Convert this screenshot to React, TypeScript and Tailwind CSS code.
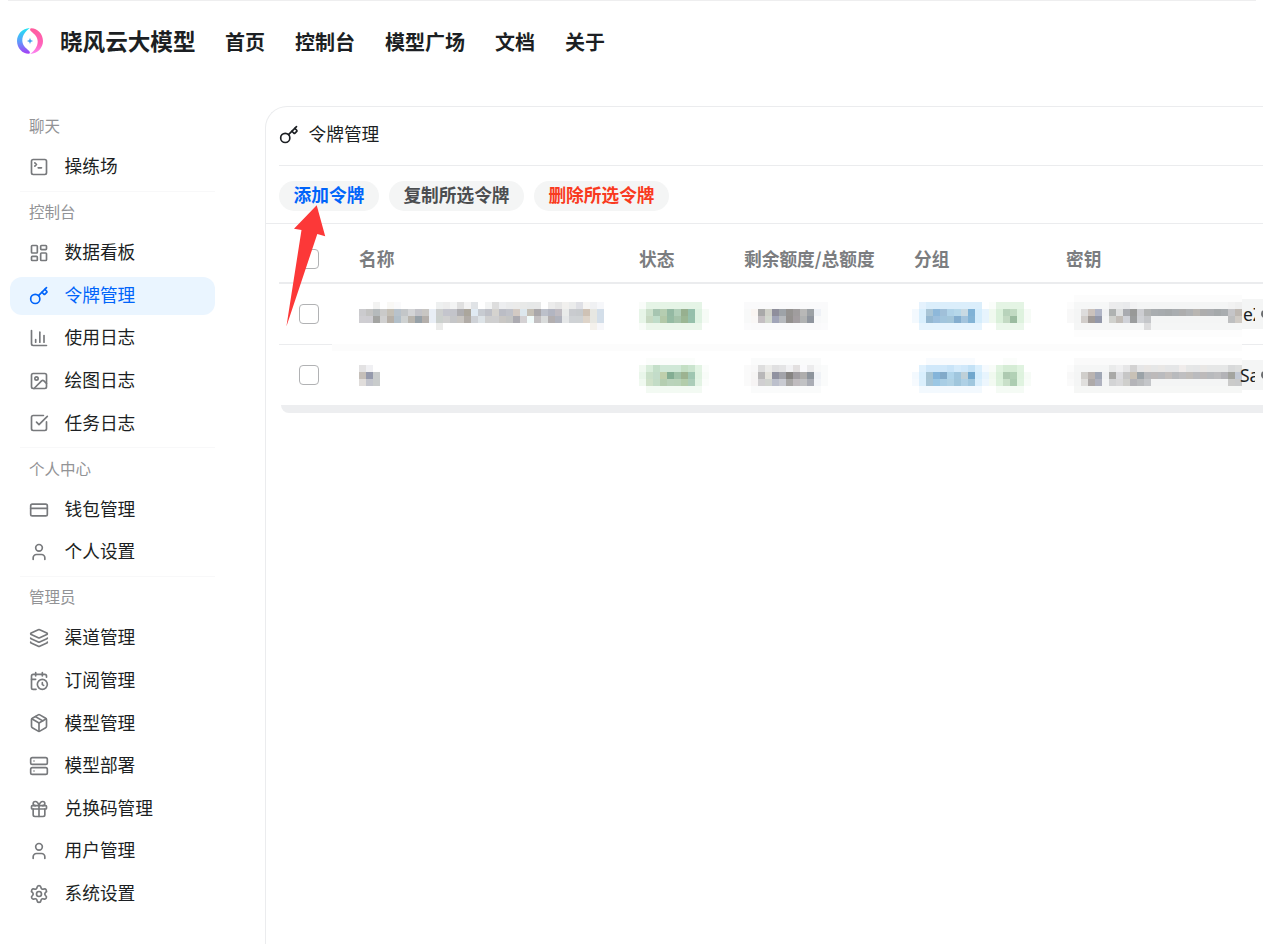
import {
  CalendarClock,
  ChartColumn,
  CreditCard,
  Gift,
  Image,
  Key,
  Layers,
  LayoutDashboard,
  Package,
  Server,
  Settings,
  SquareCheckBig,
  SquareTerminal,
  User,
  type LucideIcon,
} from 'lucide-react';

type NavItem = { label: string; icon: LucideIcon; active?: boolean };

const topLinks = ['首页', '控制台', '模型广场', '文档', '关于'];

const sections: { title: string; items: NavItem[] }[] = [
  { title: '聊天', items: [{ label: '操练场', icon: SquareTerminal }] },
  {
    title: '控制台',
    items: [
      { label: '数据看板', icon: LayoutDashboard },
      { label: '令牌管理', icon: Key, active: true },
      { label: '使用日志', icon: ChartColumn },
      { label: '绘图日志', icon: Image },
      { label: '任务日志', icon: SquareCheckBig },
    ],
  },
  {
    title: '个人中心',
    items: [
      { label: '钱包管理', icon: CreditCard },
      { label: '个人设置', icon: User },
    ],
  },
  {
    title: '管理员',
    items: [
      { label: '渠道管理', icon: Layers },
      { label: '订阅管理', icon: CalendarClock },
      { label: '模型管理', icon: Package },
      { label: '模型部署', icon: Server },
      { label: '兑换码管理', icon: Gift },
      { label: '用户管理', icon: User },
      { label: '系统设置', icon: Settings },
    ],
  },
];

// Masked values. One string per line of 7px blocks: "." is an empty block,
// "color*n" repeats the block n times.
const rows = [
  {
    name: [
      '',
      '.*2 f3f3f2 . f9f8f5 fafafb .*5 eef0f0 ededed f3f4f4 e0e0e0 f3f3f3 e0e3e6 . f3f4f4 dddddd edeef0 eaebec ebebea e8e9e8 e6e8e8 e7e8e8 . ececec e6e6e6 f1f0ee ebecec dfe0e5 f6f5f3 f0f1f3 f6f7fa',
      'cbcbce c3c3c2 b5babc cacac9 c4bfb5 b8c2cb c3c6c8 d3d4d6 c3c3c8 c8c6c3 e9eef5 cdcfce c4c5cd c3c4ca aeadb0 aba69c e0eaf3 c7cbd1 bfc1c8 d5d3cf bbbdc5 c0c2c9 d3cac3 dde7ed c4bfb5 a9a7aa bcc0ca b2b5c1 bfbbc1 e9ebea c9cbcf c7cacd cfc2b5 e7e7e2 d3dee9',
      'cfced2 cecdd2 a3a4a2 d0d0d0 b7b0a8 b2bfc9 ced1d1 b9b5ae 97a1a8 b4afab e9eef5 cbd0cd d0d0d0 c5c6c8 c9c6c2 b1aca7 ced1d6 dde3e7 cfcfcf cfcfd0 c9c7c4 c4c5c4 acabb1 d4d1d3 f1fbfb c2bfc1 d9dbdb b3afb0 b0b3bd e5e7e8 cfd2d5 cfd2d4 ded4c9 e7e7e2 d3dee9',
      '.*11 ebebea .*21 f4f1ec f7f7fa',
    ],
    status: [
      '',
      'f9fcf9 e5f4e6*8',
      'e7f5e8 cce0cb a7c5b1 b5cdb1 94b9a3 b0ceb8 97b08f 95bfab dff2e2 f6fbf6',
      'e7f5e8 c7d9c2 bfdcc9 b2c8a8 95bba3 a5c3aa 9bb794 96c0ab dff2e2 f6fbf6',
      'f8fcf8 ebf6eb*8',
    ],
    quota: [
      '',
      'fafafb*12',
      'f8f9f9 f9f5f2 a9a9a9 cfd0c8 8f8f9c 9ea3a8 959391 a09d9e b8b8b7 9ca1a5 eef1f6 f9fafa',
      'f8f9f9 f9f7f6 c4bfc2 d2d7ce a1a5b8 b6b9bd 94918f a39ea1 b0b2b2 8f959e f7f8f9 f9fafa',
      'fbfbfc fafafb*10 fbfbfc',
    ],
    group: [
      '',
      '. e5f2fd dbeefb*8 . fafdfa e4f4e4*4',
      'f3f9fe d9effd a9c5d6 8eb8da a0c0d9 b0d3e8 b6d8ea c9dae3 7fb2d6 d5edfc e7f4fd f0f9ef daf0da b8d3bb c1dac2 def2de f6fbf6',
      'f3f9fe d9effd 95b8d1 9cbfdd a1c5dd a3c6da 84aecf a3c4dd 83b4d6 d5edfc e7f4fd f0f9ef daf0da c3dac3 9bbca0 def2de f6fbf6',
      '. e6f4fe*9 .*2 ebf7eb*4',
    ],
    secret: [
      '. fcfcfc*24',
      'fcfcfc f6f7f7*5 ececed ebeced e9eaec f2f2f3 f4f5f5*13 f2f2f2 efefef',
      'f8f8f8 f4f5f5 dddcdc cbc2bc b0b5c6 f1f2f3 afb2b1 dedfdf a9abb0 989998 cccdd1 b2b4b4 a9adb0 a7abae a5a9ab a9adb0 adadad b0b2b4 b9b6b2 adadad abadb0 a5a9ab a9adb0 c5c5c8 beb8b2',
      'f8f8f8 f4f5f5 d1cdca a19b98 9398aa f4f5f5 d0d1cd c2bdb8 d0d2d8 9b9d9e cfd1d5 c4c6c9 f4f5f5*11 bebfc0 d0cbc5',
      '. f5f6f6*10 dcdcdd f5f6f6*13',
      '. fdfdfd*24',
    ],
    tail: 'eZ',
  },
  {
    name: [
      '',
      'e3e2e3 f0f0f3',
      'c5bfb9 959aac c9cccc',
      'e0dddb c3c5cd c9cccc',
    ],
    status: [
      '. fbfdfb*7',
      'f1f9f1 d9eddb c4dfc9 d0e8d7*3 c4dfc4 cae4ce e2f3e3 fbfdfb',
      'e9f6ea cae0c9 c3dcc9 bfcfac 83ad93 a0c2a8 9db391 9fc6b1 e0f2e1 f8fcf8',
      'f0f9f0 cfe1c9 c3dcc6 b5ceb1 bad3bb b9d3b9 b3cdab accdb9 e3f3e4 fbfdfb',
      '. f3faf3*8',
    ],
    quota: [
      '. fafbfb*10',
      'fafafa f8f8f8 dedede ececea e0e0e1 e4e4e5 f2f2f4 e3e0e0 fafafc ececed f8f9f9 fafbfb',
      'fafafa f6f5f4 b8b7b8 e3e2db 9092a0 a3a4aa 868482 a19ea2 afaead 8d949c eff2f6 fafbfb',
      'fafafa f6f4f4 d0cfd1 d0d3cf bcc0cc c9cbd2 a9a8a7 c0bcbf c1c2c4 aaadb5 f3f5f8 fafbfb',
      '. fafbfb*10',
    ],
    group: [
      '.*2 f8fbfe*7 .*4 fbfdfb*2',
      '. e0f1fd d0e8fa*3 c9e4f8 d5ebfb d0e8fa c4e2f6 dbeffc f5fafe f8fcf8 e0f3e0 d5ecd5*2 e0f3e0',
      'f3f9fe d9effd a7c4d3 84b4d9 82aac9 afd4ea a0c6de bfd0d8 70a7cd d5edfc e7f4fd f0f9ef daf0da aecab1 b2d1b6 def2de f6fbf6',
      'f6fafe dbeffc a7c5d6 9bc7e4 a9cee5 b0d2e5 a0c6dc aed0e5 a0c7de dbeffc edf6fd f3faf2 dcf1dc c9e0c9 adcdb2 e0f3e0 f8fcf8',
      '. f3f9fe*9 .*2 f5fbf5*4',
    ],
    secret: [
      '. fafafa*24',
      'fcfcfc f5f6f6*5 eaebeb f0f0f1 e6e6e7 d3d2d2 e6e6e7 e9e6e4 e6e7e7 e9e7e5 e5e6e7*2 f0eceb e6e7e7 e5e6e7 e9e7e5 e6e7e7*3 d8d9da dcdddd',
      'f8f8f8 f4f5f5 d0cecb bab4b1 a0a7b5 f1f2f3 a9a9a7 dcdcdf c6c6c6 c8c1b6 9ba3a8 b9babd bdbaba babbbe c3bfbd b8babd bfbfc1 c1bebb babbbe bdbaba b8babd bdbdbf b3b3b7 a3a49f c3c9d4',
      'fafafa f4f5f5 e0dfdd aeaaa9 afb2bf f4f5f5 d3d4d5 d9d9da cfcfcc b4b4b8 babcbe c4c6c9 f4f5f5*11 cbcbca c9cacb',
      '. f6f7f6*24',
    ],
    tail: 'Sa',
  },
];

function expand(line: string) {
  return line
    .split(' ')
    .filter(Boolean)
    .flatMap((token) => {
      const [color, count] = token.split('*');
      return Array<string>(Number(count ?? 1)).fill(color);
    });
}

function Mosaic({ lines }: { lines: string[] }) {
  const cells = lines.map(expand);
  const cols = Math.max(...cells.map((c) => c.length));
  return (
    <svg
      width={cols * 7}
      height={cells.length * 7}
      shapeRendering="crispEdges"
      className="block shrink-0"
      aria-hidden="true"
    >
      {cells.map((line, y) =>
        line.map((color, x) =>
          color === '.' ? null : (
            <rect key={`${x}-${y}`} x={x * 7} y={y * 7} width={7} height={7} fill={`#${color}`} />
          ),
        ),
      )}
    </svg>
  );
}

const crescent =
  'M12.800 0C5.400.4 0 6.200 0 13c0 7.200 5.600 12.800 11.600 12.800 1.600-.2 1.700-1.700.6-2.900C8.400 19.600 5.300 16.800 5.300 12.400 5.300 7.400 8.600 3 12.800 0Z';

function Logo() {
  return (
    <svg width="26" height="26" viewBox="0 0 26 26" className="-mt-[4px]" aria-hidden="true">
      <defs>
        <linearGradient id="cool" x1="0.6" y1="0" x2="0.6" y2="1">
          <stop offset="0" stopColor="#1fe6f2" />
          <stop offset="0.5" stopColor="#5aa0fb" />
          <stop offset="1" stopColor="#a63df5" />
        </linearGradient>
        <linearGradient id="warm" x1="0.5" y1="1" x2="0.5" y2="0">
          <stop offset="0" stopColor="#ff5c9d" />
          <stop offset="0.6" stopColor="#ff62b8" />
          <stop offset="1" stopColor="#fb86f5" />
        </linearGradient>
      </defs>
      <path fill="url(#cool)" d={crescent} />
      <path fill="url(#warm)" transform="rotate(180 13 13)" d={crescent} />
      <path fill="#48a3ee" d="M13 9.800c.5 2.200 1 2.700 3.200 3.200-2.200.5-2.700 1-3.200 3.200-.5-2.200-1-2.700-3.200-3.200 2.200-.5 2.700-1 3.200-3.200Z" />
    </svg>
  );
}

function Checkbox() {
  return <span className="ml-5 block size-5 rounded-[4px] border border-[#b1b2b4] bg-white" />;
}

function Header() {
  return (
    <header className="flex h-[84px] items-center pl-[17px] font-bold text-[#1c1f23]">
      <Logo />
      <span className="-mt-[4px] ml-[17px] w-[165px] text-[22.6px] leading-none">晓风云大模型</span>
      <nav className="-mt-[2px] flex gap-[30px] text-xl leading-none">
        {topLinks.map((link) => (
          <a key={link}>{link}</a>
        ))}
      </nav>
    </header>
  );
}

function Sidebar() {
  return (
    <aside className="w-[265px] shrink-0 pt-[29px] pr-[50px] pl-[10px]">
      {sections.map((section, i) => (
        <section key={section.title}>
          {i > 0 && <div className="mb-[8.500px] ml-[10px] h-px bg-[#f8f8f9]" />}
          <h2 className="mb-[10px] h-6 pl-[19px] text-[15.5px] leading-[22px] text-[#929396]">{section.title}</h2>
          <ul>
            {section.items.map(({ label, icon: Icon, active }) => (
              <li
                key={label}
                className={`mb-[4.600px] flex h-[38px] items-center rounded-xl pl-[19px] text-[17.7px] ${
                  active ? 'bg-[#eaf5ff] text-[#0064fa]' : 'text-[#1c1f23]'
                }`}
              >
                <Icon size={20} className={active ? 'text-[#0064fa]' : 'text-[#77797c]'} />
                <span className="-mt-[2px] ml-[15.500px] leading-none">{label}</span>
              </li>
            ))}
          </ul>
        </section>
      ))}
    </aside>
  );
}

function TokenTable() {
  const grid = 'grid grid-cols-[80px_280px_105px_168px_154px_1fr]';
  return (
    <div className="pl-[13px]">
      <div
        className={`${grid} h-[60px] items-center border-b-2 border-[#ebecee] pt-3 text-[17.7px] leading-none font-bold text-[#7b7d80]`}
      >
        <Checkbox />
        <span>名称</span>
        <span>状态</span>
        <span>剩余额度/总额度</span>
        <span className="pl-[2px]">分组</span>
        <span>密钥</span>
      </div>
      {rows.map((row, i) => (
        <div key={row.tail}>
          {i > 0 && (
            <div className="flex h-px">
              <div className="h-px w-[53px] bg-[#ebecee]" />
              <div className="h-[7px] w-[910px] bg-[#fcfcfc]" />
              <div className="h-px flex-1 bg-[#ebecee]" />
            </div>
          )}
          <div className={`${grid} h-[60px] items-start ${i === 0 ? 'pt-[11px]' : 'pt-[13px]'}`}>
            <div className={i === 0 ? 'pt-[9px]' : 'pt-[7px]'}>
              <Checkbox />
            </div>
            <Mosaic lines={row.name} />
            <Mosaic lines={row.status} />
            <Mosaic lines={row.quota} />
            <Mosaic lines={row.group} />
            <div className="flex pl-px">
              <Mosaic lines={row.secret} />
              <div
                className={`flex h-[30px] flex-1 items-center bg-[#f4f5f5] ${i === 0 ? 'mt-[4px] pl-px' : 'mt-[2px]'}`}
              >
                <span
                  className={`overflow-hidden font-["Noto_Sans",sans-serif] text-[17.5px] leading-[30px] text-[#1c1f23] ${
                    i === 0 ? 'w-3' : '-ml-[2px] w-[15px]'
                  }`}
                >
                  {row.tail}
                </span>
                <span className="ml-[6px] size-[8px] shrink-0 rounded-full bg-[#6b6d70]" />
              </div>
            </div>
          </div>
        </div>
      ))}
      <div className="ml-[2px] h-2 rounded-bl-[14px] bg-[#edeef0]" />
    </div>
  );
}

function Arrow() {
  return (
    <svg
      className="pointer-events-none absolute top-[97px] left-[18px]"
      width="44"
      height="124"
      viewBox="284 204 44 124"
      aria-hidden="true"
    >
      <path fill="#fc3838" d="M316.700 205.300 294 228.700l7.500 1.300-15.100 96.500L317.300 234l7.900 2.200Z" />
    </svg>
  );
}

export default function App() {
  const button = 'flex h-[30px] items-center justify-center rounded-full bg-[#f4f5f5] pb-[3px] leading-none font-bold whitespace-nowrap';
  return (
    <div className="h-[944px] w-[1263px] overflow-hidden bg-white font-['Noto_Sans_CJK_SC',sans-serif]">
      <div className="mr-[7px] ml-2 h-px bg-[#eeeeef]" />
      <Header />
      <div className="flex">
        <Sidebar />
        <main className="relative mt-[21px] h-[860px] flex-1 rounded-tl-[22px] border-t border-l border-[#ebecee]">
          <div className="ml-[13px] flex h-[59px] items-center border-b border-[#ebecee] pb-[3px] text-[17.7px] text-[#1c1f23]">
            <Key size={20} />
            <span className="-mt-[2px] ml-[9.500px] leading-none">令牌管理</span>
          </div>
          <div className="flex h-[58px] items-center gap-[10px] border-b border-[#ebecee] pt-[3px] pl-[13px] text-[17.7px]">
            <button className={`${button} w-[100px] text-[#0064fa]`}>添加令牌</button>
            <button className={`${button} w-[135px] text-[#4b4d50]`}>复制所选令牌</button>
            <button className={`${button} w-[135px] text-[#f93920]`}>删除所选令牌</button>
          </div>
          <TokenTable />
          <Arrow />
        </main>
      </div>
    </div>
  );
}
